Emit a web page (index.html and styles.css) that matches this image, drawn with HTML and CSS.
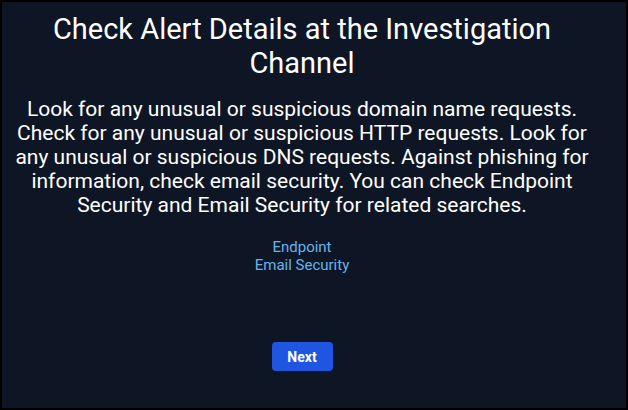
FILE: index.html
```html
<!DOCTYPE html>
<html>
<head>
<meta charset="utf-8">
<link rel="stylesheet" href="styles.css">
</head>
<body>
<div class="panel">
  <h1 class="title">Check Alert Details at the Investigation Channel</h1>
  <p class="desc">Look for any unusual or suspicious domain name requests. Check for any unusual or suspicious HTTP requests. Look for any unusual or suspicious DNS requests. Against phishing for information, check email security. You can check Endpoint Security and Email Security for related searches.</p>
  <div class="links">
    <a class="link" href="#">Endpoint</a>
    <a class="link" href="#">Email Security</a>
  </div>
  <div class="actions">
    <button class="btn">Next</button>
  </div>
</div>
</body>
</html>
```
FILE: styles.css
```css
html, body {
  margin: 0;
  padding: 0;
  background: #000;
}
.panel {
  box-sizing: border-box;
  width: 628px;
  height: 410px;
  border: 2px solid #000;
  background: #0e1625;
  padding: 10px 36px 0 12px;
  display: flex;
  flex-direction: column;
  align-items: center;
  font-family: Roboto, "Noto Sans", sans-serif;
  color: #fff;
  text-align: center;
}
.title {
  margin: 0;
  font-size: 29px;
  font-weight: 400;
  line-height: 34px;
  padding: 0 20px;
}
.desc {
  margin: 17px 0 0;
  font-size: 21px;
  line-height: 24px;
}
.links {
  margin-top: 21px;
  display: flex;
  flex-direction: column;
  align-items: center;
}
.link {
  color: #65b4ee;
  text-decoration: none;
  font-size: 15px;
  line-height: 18px;
}
.actions {
  margin-top: 68px;
}
.btn {
  background: #1e56e1;
  color: #fff;
  border: none;
  border-radius: 4px;
  font-family: Roboto, "Noto Sans", sans-serif;
  font-size: 14px;
  font-weight: 700;
  width: 61px;
  height: 29px;
  padding: 0;
}
```
